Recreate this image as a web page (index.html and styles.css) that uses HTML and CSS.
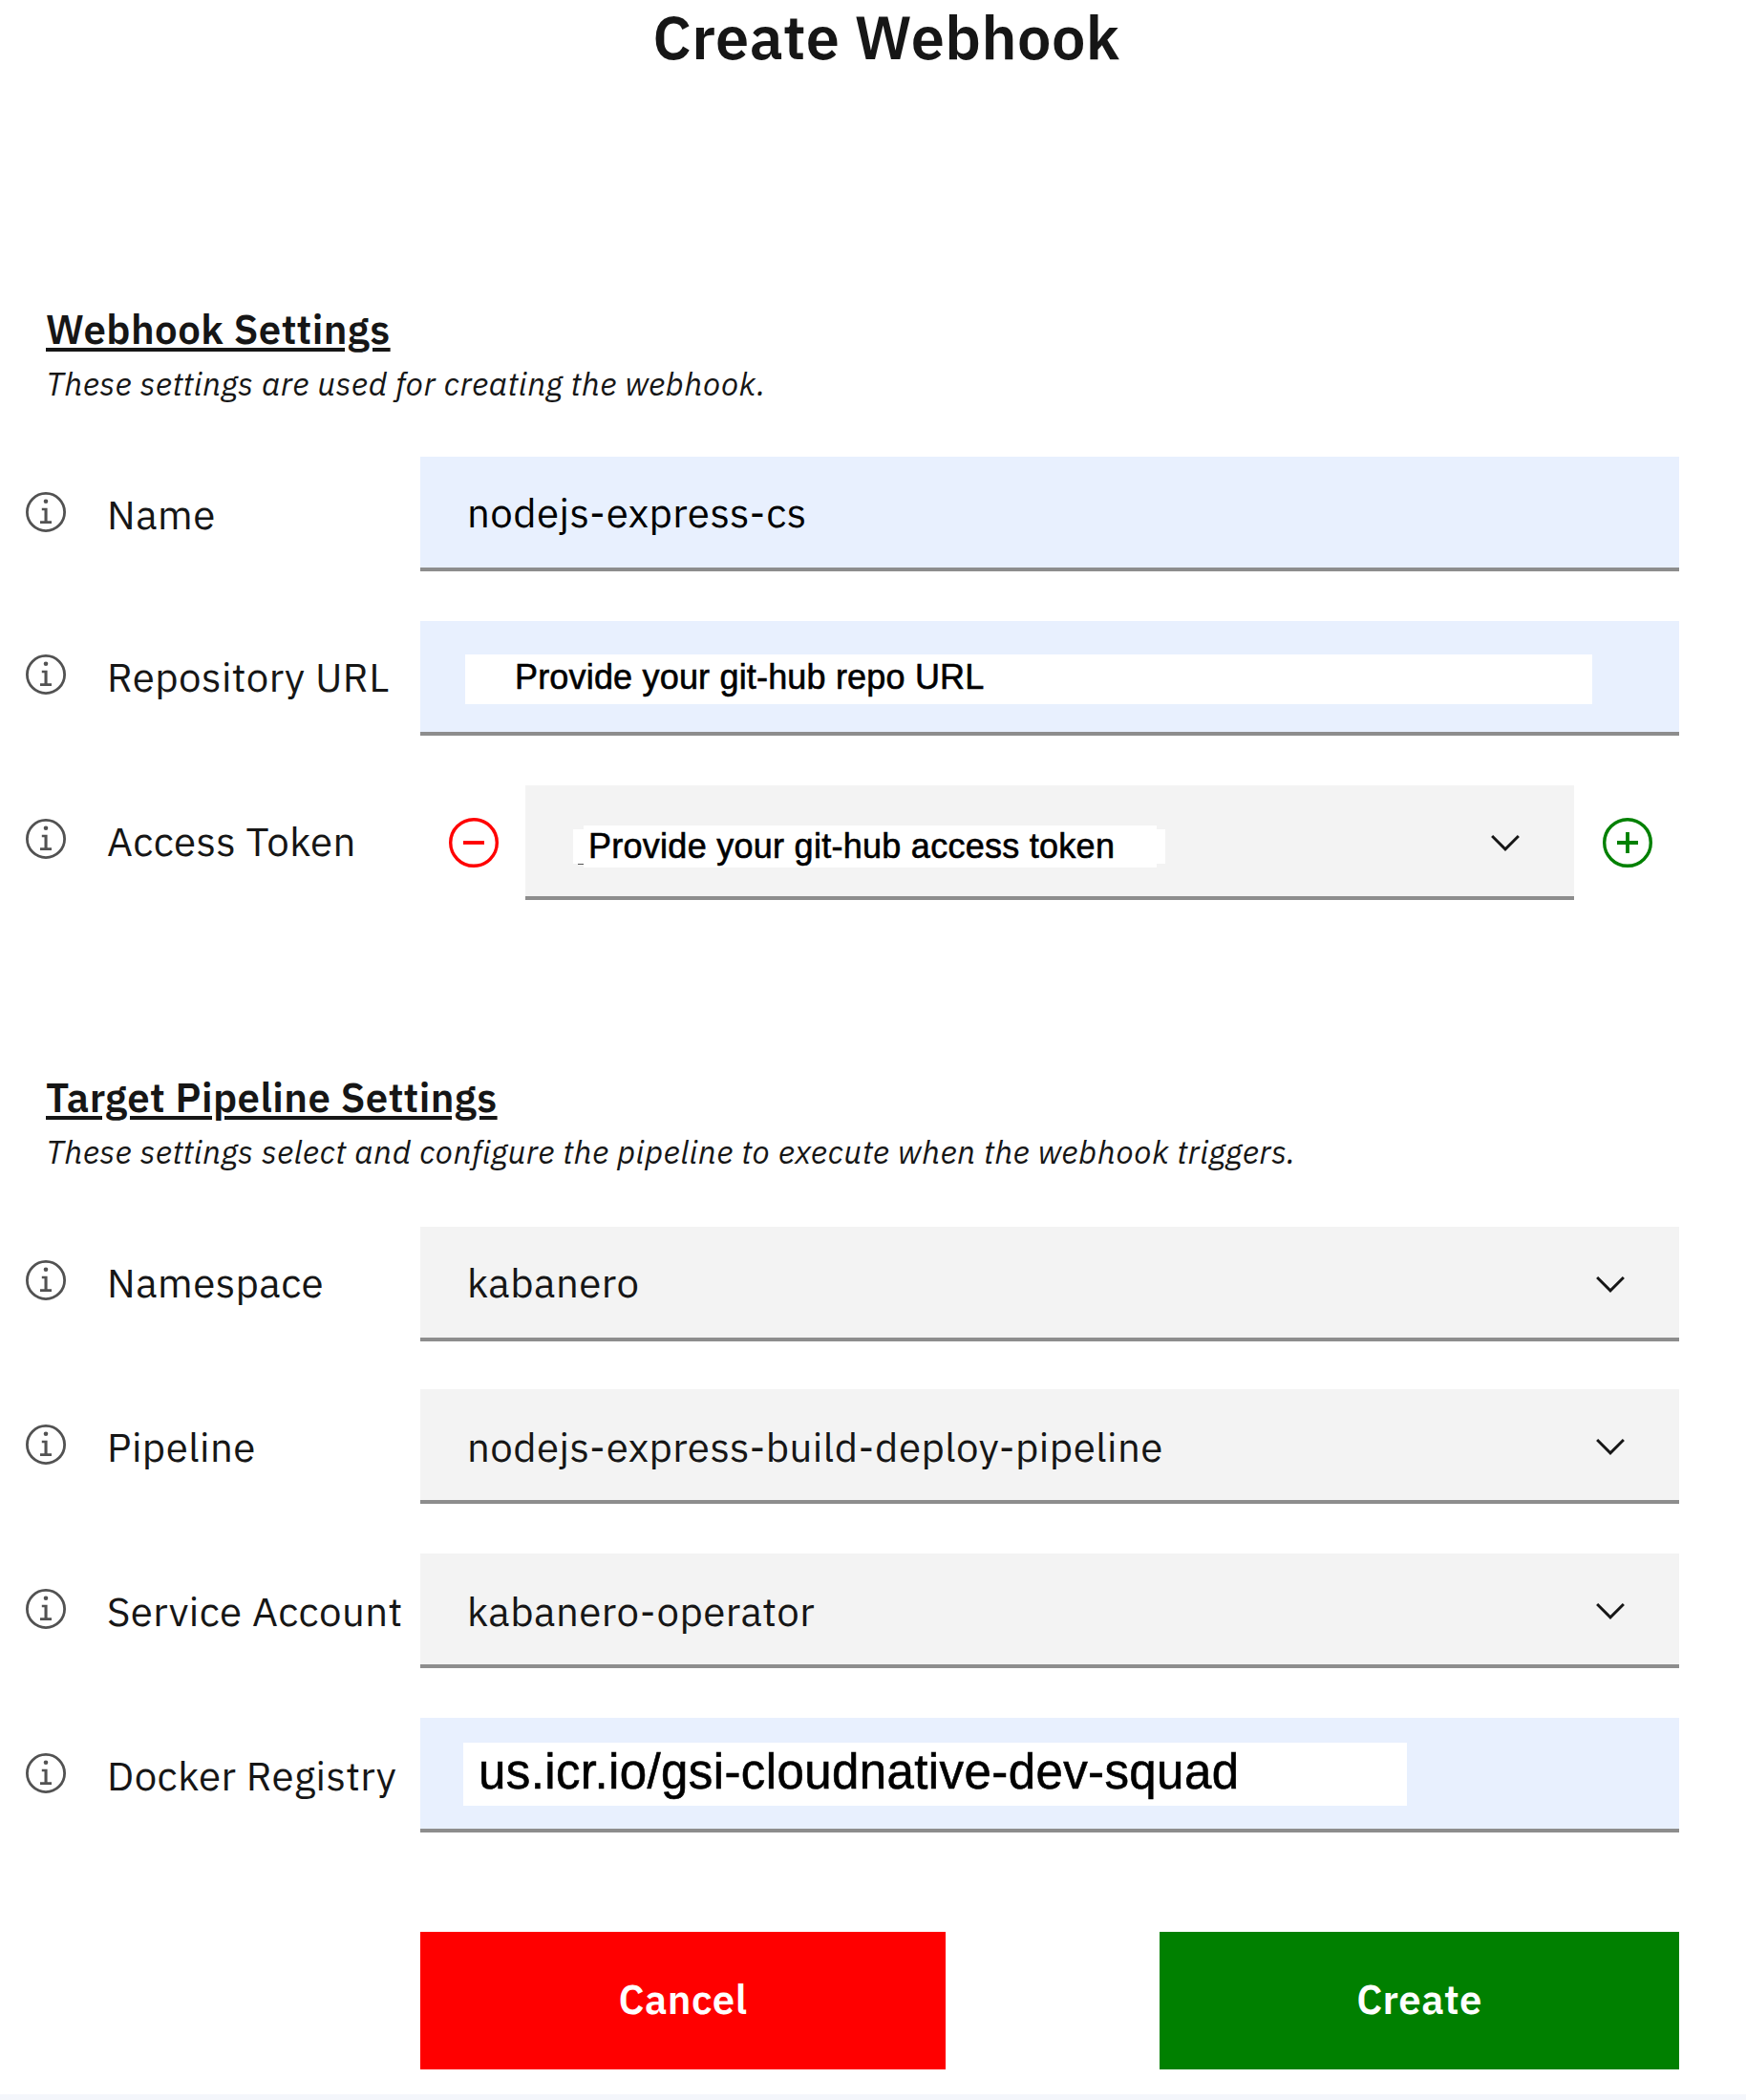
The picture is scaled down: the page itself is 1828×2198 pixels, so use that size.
FILE: index.html
```html
<!DOCTYPE html>
<html lang="en">
<head>
<meta charset="utf-8">
<title>Create Webhook</title>
<link rel="stylesheet" href="styles.css">
</head>
<body>
<svg class="sprite" aria-hidden="true">
  <symbol id="info" viewBox="0 0 42 42">
    <circle cx="21" cy="21" r="19.6" fill="none" stroke="currentColor" stroke-width="2.8"/>
    <circle cx="21" cy="9.8" r="2.3" fill="currentColor"/>
    <path d="M16.8 16.7H22.6V30.2H27V32.9H15V30.2H19.5V19.3H16.8Z" fill="currentColor"/>
  </symbol>
  <symbol id="chevron" viewBox="3 5.3 10 5.7">
    <path d="M8 11 3 6l.7-.7L8 9.6l4.3-4.3.7.7z" fill="currentColor"/>
  </symbol>
  <symbol id="minus" viewBox="0 0 52 52">
    <circle cx="26" cy="26" r="24.3" fill="none" stroke="currentColor" stroke-width="3.4"/>
    <path d="M15 26H37" fill="none" stroke="currentColor" stroke-width="3.8"/>
  </symbol>
  <symbol id="plus" viewBox="0 0 52 52">
    <circle cx="26" cy="26" r="24.3" fill="none" stroke="currentColor" stroke-width="3.4"/>
    <path d="M15 26H37M26 15V37" fill="none" stroke="currentColor" stroke-width="3.8"/>
  </symbol>
</svg>

<main class="page">
  <h1 class="title">Create Webhook</h1>

  <section class="section section--webhook">
    <h2 class="section-title">Webhook Settings</h2>
    <p class="section-note">These settings are used for creating the webhook.</p>

    <div class="row">
      <div class="row-label"><svg class="info"><use href="#info"/></svg><span>Name</span></div>
      <div class="field field--filled"><span class="value value--input">nodejs-express-cs</span></div>
    </div>
    <div class="row row--raised">
      <div class="row-label"><svg class="info"><use href="#info"/></svg><span>Repository URL</span></div>
      <div class="field field--filled"><span class="mask mask--repo">Provide your git-hub repo URL</span></div>
    </div>
    <div class="row row--raised">
      <div class="row-label"><svg class="info"><use href="#info"/></svg><span>Access Token</span></div>
      <div class="token">
        <svg class="round round--remove"><use href="#minus"/></svg>
        <div class="field field--select"><span class="mask mask--token">Provide your git-hub access token</span><svg class="chevron"><use href="#chevron"/></svg></div>
        <svg class="round round--add"><use href="#plus"/></svg>
      </div>
    </div>
  </section>

  <section class="section section--pipeline">
    <h2 class="section-title">Target Pipeline Settings</h2>
    <p class="section-note">These settings select and configure the pipeline to execute when the webhook triggers.</p>

    <div class="row row--raised row--namespace">
      <div class="row-label"><svg class="info"><use href="#info"/></svg><span>Namespace</span></div>
      <div class="field field--select"><span class="value">kabanero</span><svg class="chevron"><use href="#chevron"/></svg></div>
    </div>
    <div class="row">
      <div class="row-label"><svg class="info"><use href="#info"/></svg><span>Pipeline</span></div>
      <div class="field field--select"><span class="value">nodejs-express-build-deploy-pipeline</span><svg class="chevron"><use href="#chevron"/></svg></div>
    </div>
    <div class="row">
      <div class="row-label"><svg class="info"><use href="#info"/></svg><span>Service Account</span></div>
      <div class="field field--select"><span class="value">kabanero-operator</span><svg class="chevron"><use href="#chevron"/></svg></div>
    </div>
    <div class="row">
      <div class="row-label"><svg class="info"><use href="#info"/></svg><span>Docker Registry</span></div>
      <div class="field field--filled"><span class="mask mask--registry">us.icr.io/gsi-cloudnative-dev-squad</span></div>
    </div>
  </section>

  <div class="actions">
    <button class="button button--cancel" type="button">Cancel</button>
    <button class="button button--create" type="button">Create</button>
  </div>
  <div class="page-edge"></div>
</main>
</body>
</html>
```
FILE: styles.css
```css
* { box-sizing: border-box; }

body {
  margin: 0;
  background: #fff;
  color: #161616;
  font-family: "IBM Plex Sans", Inter, sans-serif;
  font-size: 42px;
  line-height: 54px;
  letter-spacing: 0.45px;
}

.sprite { display: none; }
svg { display: block; flex: none; }

.page {
  display: flex;
  flex-direction: column;
  width: 1828px;
  height: 2198px;
}

.title {
  margin: 0;
  padding-left: 28px;
  font-size: 63px;
  font-weight: 600;
  line-height: 77px;
  text-align: center;
}

.section--webhook { margin-top: 241px; }
.section--pipeline { margin-top: 180px; }

.section-title {
  margin: 0 0 6px 48px;
  font-size: 42px;
  font-weight: 600;
  line-height: 54px;
  text-decoration: underline;
  text-decoration-thickness: 4px;
  text-underline-offset: 4px;
}

.section-note {
  margin: 0 0 54px 48px;
  font-size: 33.7px;
  font-style: italic;
  line-height: 46px;
  letter-spacing: 0.42px;
  white-space: nowrap;
}
.section--pipeline .section-note { margin-bottom: 56px; }

.row {
  display: grid;
  grid-template-columns: 413px 1318px;
  height: 120px;
  margin-left: 27px;
}
.row + .row { margin-top: 52px; }
.row.row--namespace { margin-bottom: -2px; }

.row-label {
  display: flex;
  align-items: flex-start;
  gap: 43px;
  padding-top: 34px;
  white-space: nowrap;
}
.row--raised .row-label { padding-top: 32px; }

.info {
  width: 42px;
  height: 42px;
  margin-top: 3px;
  color: #525252;
}

.field {
  display: flex;
  align-items: flex-start;
  justify-content: space-between;
  height: 120px;
  border-bottom: 4px solid #8d8d8d;
}
.field--filled { background: #e8f0fe; }
.field--select { background: #f3f3f3; }

.value { padding: 34px 0 0 49px; }
.row--raised .value { padding-top: 32px; }
.value--input {
  padding-top: 32px;
  color: #000;
}

.chevron {
  width: 30px;
  height: 17px;
  margin: 52px 57px 0 0;
}

/* white strips that cover the original entries */
.mask {
  color: #000;
  background: #fff;
  font-family: "Liberation Sans", Arial, sans-serif;
  font-size: 36px;
  white-space: nowrap;
  -webkit-text-stroke: 0.6px #000;
}
.mask--repo {
  width: 1180px;
  height: 52px;
  margin: 35px 0 0 47px;
  padding-left: 52px;
  line-height: 47px;
  letter-spacing: 0.18px;
}
.mask--token {
  width: 620px;
  height: 44px;
  margin: 42px 0 0 50px;
  padding-left: 16px;
  line-height: 43px;
  letter-spacing: 0.27px;
  background:
    linear-gradient(#555, #555) 5px 40px / 6px 1px no-repeat,
    linear-gradient(#fff, #fff) 11px 0 / 600px 44px no-repeat,
    linear-gradient(#fff, #fff) 0 4px / 620px 36px no-repeat;
}
.mask--registry {
  width: 988px;
  height: 66px;
  margin: 26px 0 0 45px;
  padding-left: 16px;
  font-size: 51px;
  line-height: 61px;
  letter-spacing: 0.4px;
}

.token {
  display: flex;
  align-items: center;
  padding-left: 30px;
}
.token .field { width: 1098px; margin: 0 30px 0 28px; }
.round { width: 52px; height: 52px; }
.round--remove { color: #f00; }
.round--add { color: #008000; }

.actions {
  display: flex;
  justify-content: space-between;
  width: 1318px;
  margin: 104px 0 0 440px;
}
.button {
  height: 144px;
  padding: 0 0 3px;
  border: 0;
  color: #fff;
  font: 600 42px/54px "IBM Plex Sans", Inter, sans-serif;
  letter-spacing: 0.45px;
}
.button--cancel { width: 550px; background: #f00; }
.button--create { width: 544px; background: #008000; }

.page-edge {
  height: 6px;
  margin-top: auto;
  background: #f4f6fb;
}
```
